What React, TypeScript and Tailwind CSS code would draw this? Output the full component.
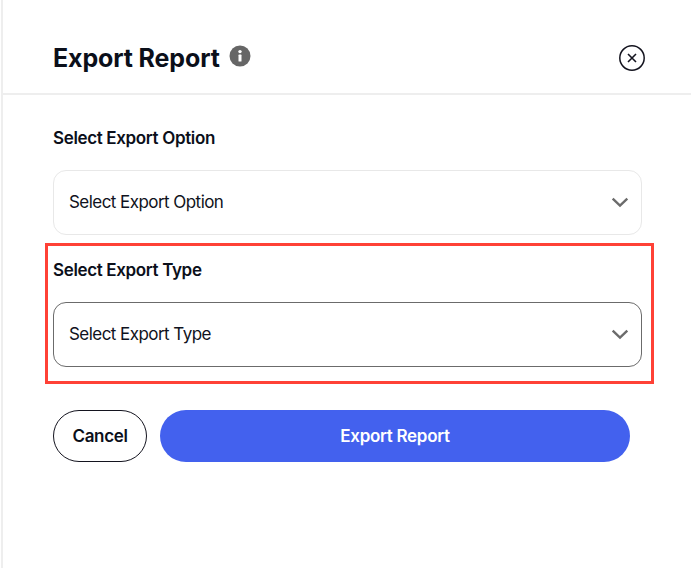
import React from "react";

function Chevron() {
  return (
    <svg width="18" height="11" viewBox="0 0 18 11" fill="none" className="shrink-0">
      <path d="M1.7 1.7 L9 8.6 L16.3 1.7" stroke="#6b6b6b" strokeWidth="2.4" />
    </svg>
  );
}

function Field({ label, active }: { label: string; active?: boolean }) {
  return (
    <div className="flex flex-col">
      <div className="h-[20px] text-[17px] leading-[20px] font-semibold tracking-[-0.35px] text-[#0b0f1a]">{label}</div>
      <div
        className={
          "mt-[22px] h-[65px] w-[589px] rounded-[13px] border pl-[15px] pr-[12px] flex items-center justify-between " +
          (active ? "border-[#6b6b6b]" : "border-[#e8e8e8]")
        }
      >
        <span className="text-[17px] leading-[22px] mb-[1px] text-[#0f1220] tracking-[-0.55px]">{label}</span>
        <Chevron />
      </div>
    </div>
  );
}

export default function App() {
  return (
    <div className="relative ml-[1px] w-[690px] h-[568px] overflow-hidden bg-white border-l-2 border-[#eeeeee] font-['Inter',sans-serif]">
      <header className="h-[95px] border-b-2 border-[#eeeeee] pl-[50px] pr-[46px] pt-[41px] flex items-start justify-between">
        <div className="flex items-start gap-[9px]">
          <h1 className="text-[25px] leading-[34px] font-bold tracking-[-0.13px] text-[#0b0f1a]">Export Report</h1>
          <svg width="22" height="22" viewBox="0 0 22 22" className="mt-[4px]">
            <circle cx="11" cy="11" r="10.5" fill="#666666" />
            <circle cx="11" cy="6.6" r="1.7" fill="#ffffff" />
            <rect x="9.5" y="9.6" width="3" height="7" rx="0.6" fill="#ffffff" />
          </svg>
        </div>
        <svg width="26" height="26" viewBox="0 0 26 26" fill="none" className="mt-[4px]">
          <circle cx="13" cy="13" r="12.2" stroke="#14141f" strokeWidth="1.5" />
          <path d="M9 9 L17 17 M17 9 L9 17" stroke="#14141f" strokeWidth="1.6" />
        </svg>
      </header>
      <main className="pl-[50px] pt-[33px] flex flex-col gap-[25px]">
        <Field label="Select Export Option" />
        <Field label="Select Export Type" active />
        <div className="mt-[18px] flex gap-[13px]">
          <button className="h-[52px] w-[94px] pt-[2px] rounded-full border border-[#14141f] bg-white text-[17px] font-semibold tracking-[-0.35px] text-[#0b0f1a]">
            Cancel
          </button>
          <button className="h-[52px] w-[470px] pt-[2px] rounded-full bg-[#4361ee] text-[17px] font-semibold tracking-[-0.3px] text-white">
            Export Report
          </button>
        </div>
      </main>
      <div className="absolute left-[42px] top-[243px] h-[141px] w-[609px] border-[3px] border-[#ff4136]" />
    </div>
  );
}
